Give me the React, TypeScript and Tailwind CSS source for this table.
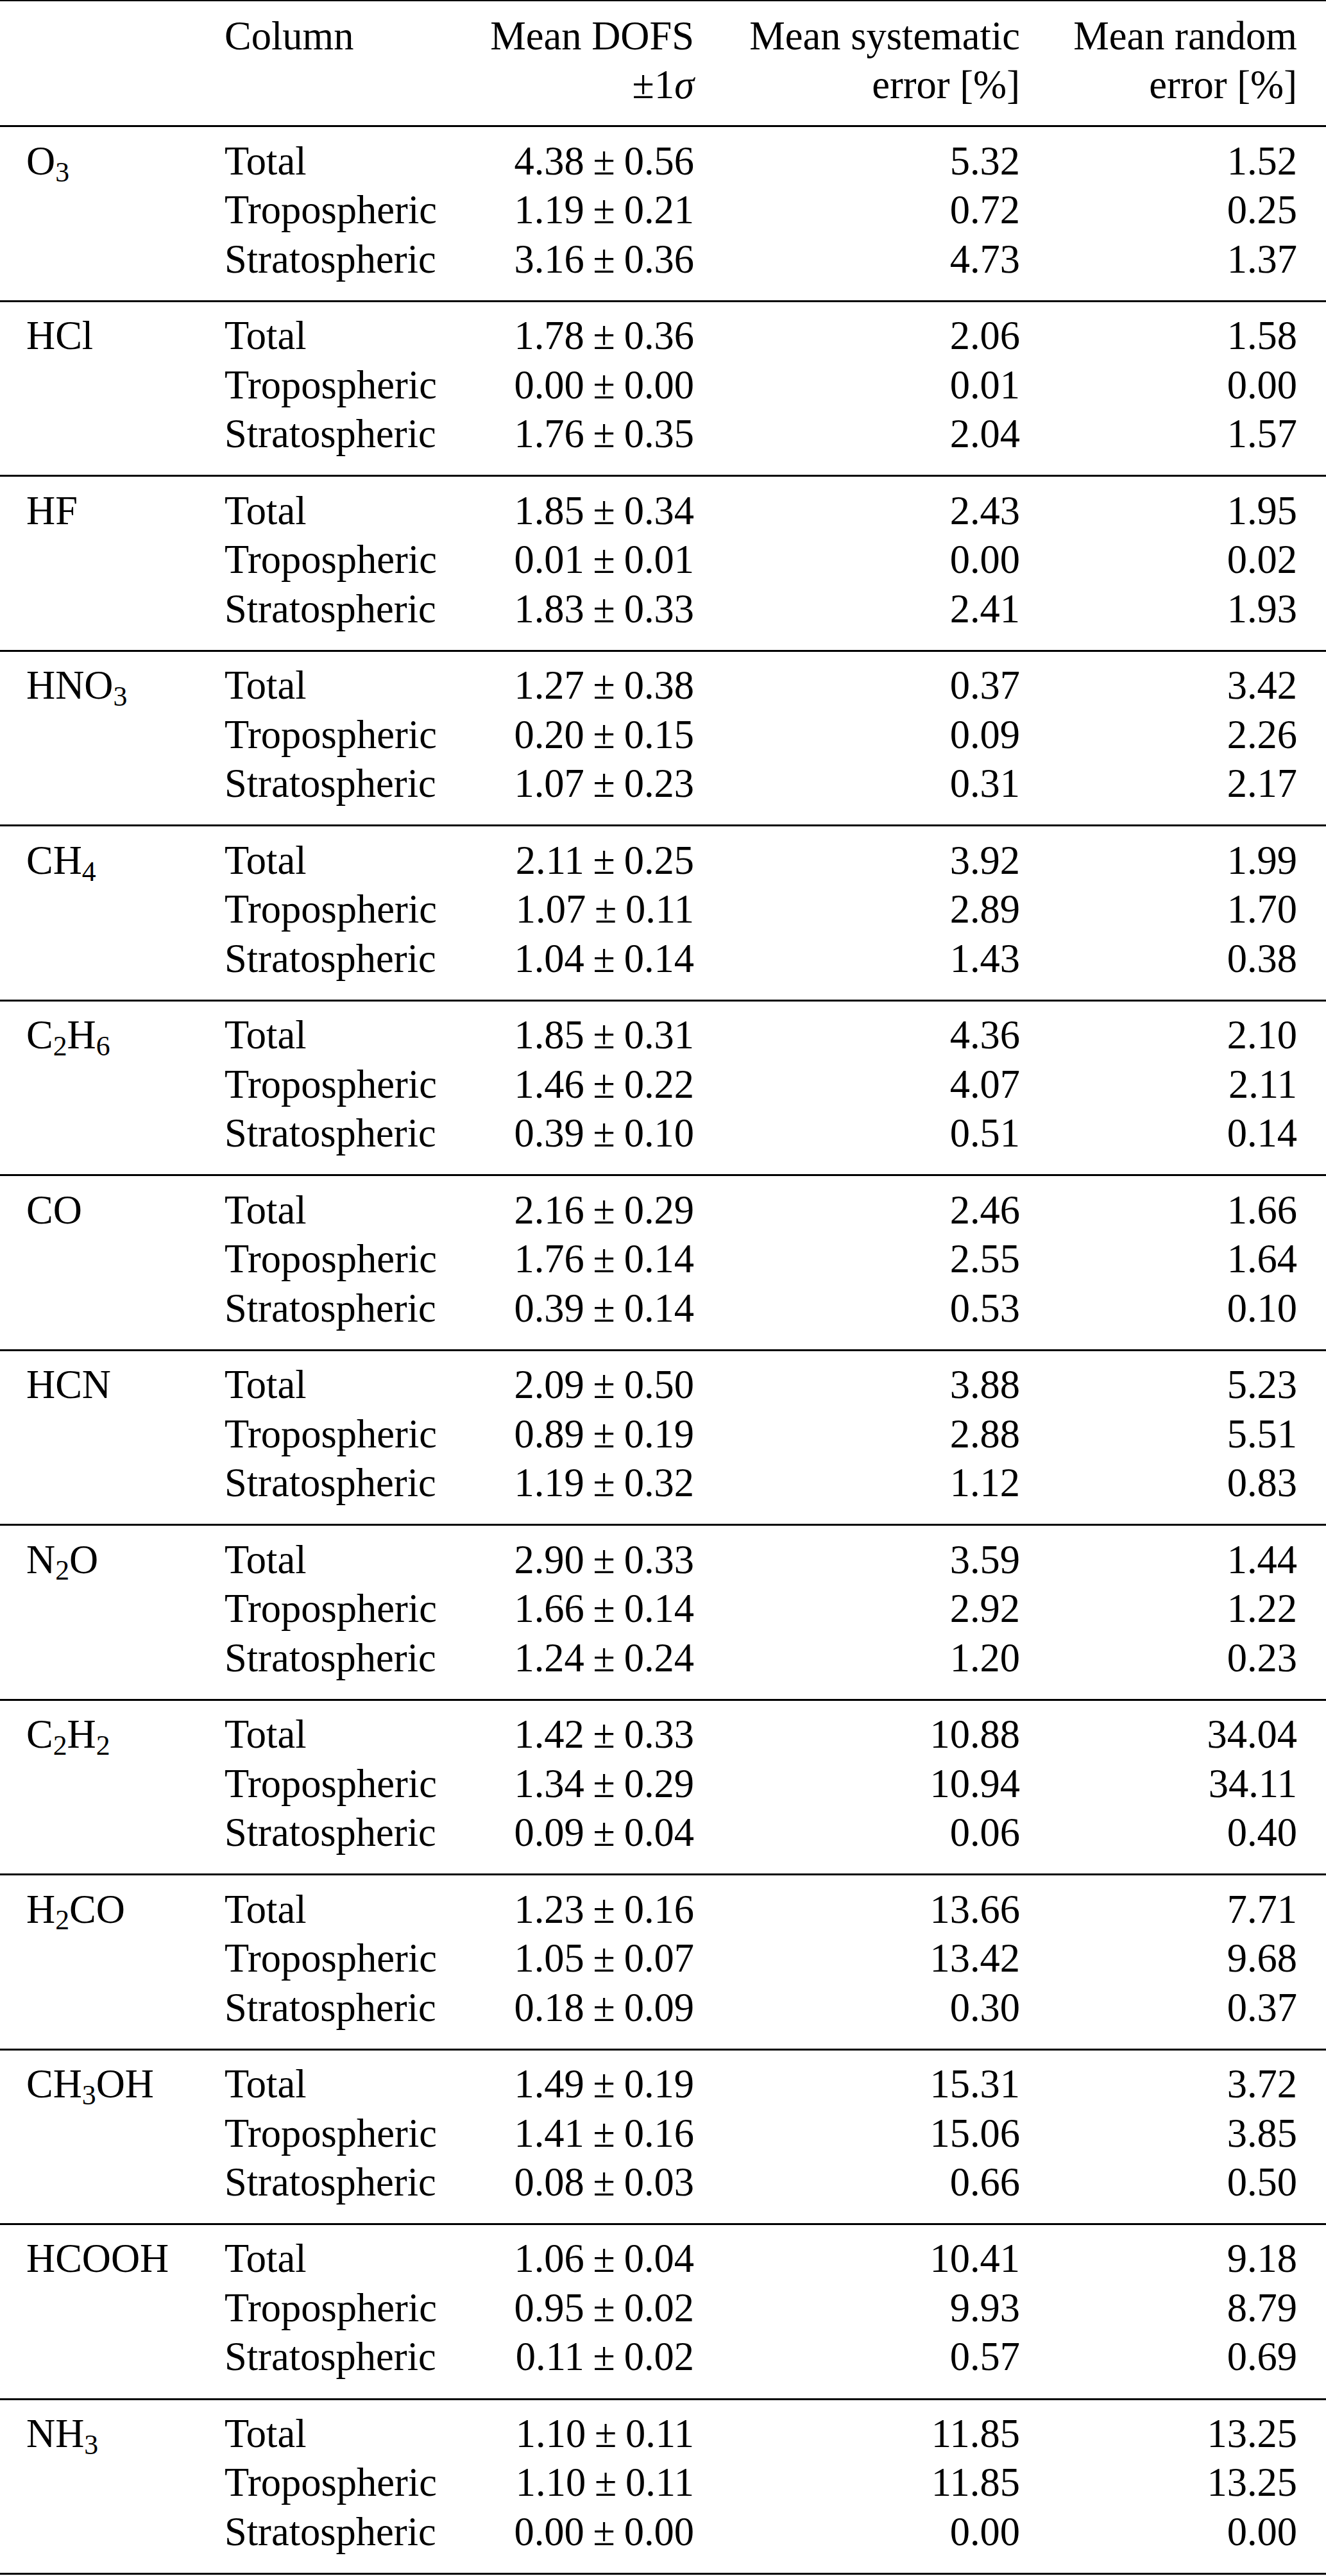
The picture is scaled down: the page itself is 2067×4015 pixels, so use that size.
import React from 'react';

type Row = [string, string, string, string, string];
type Group = { species: string; rows: Row[] };

const groups: Group[] = [
  { species: 'O3', rows: [['Total', '4.38', '0.56', '5.32', '1.52'], ['Tropospheric', '1.19', '0.21', '0.72', '0.25'], ['Stratospheric', '3.16', '0.36', '4.73', '1.37']] },
  { species: 'HCl', rows: [['Total', '1.78', '0.36', '2.06', '1.58'], ['Tropospheric', '0.00', '0.00', '0.01', '0.00'], ['Stratospheric', '1.76', '0.35', '2.04', '1.57']] },
  { species: 'HF', rows: [['Total', '1.85', '0.34', '2.43', '1.95'], ['Tropospheric', '0.01', '0.01', '0.00', '0.02'], ['Stratospheric', '1.83', '0.33', '2.41', '1.93']] },
  { species: 'HNO3', rows: [['Total', '1.27', '0.38', '0.37', '3.42'], ['Tropospheric', '0.20', '0.15', '0.09', '2.26'], ['Stratospheric', '1.07', '0.23', '0.31', '2.17']] },
  { species: 'CH4', rows: [['Total', '2.11', '0.25', '3.92', '1.99'], ['Tropospheric', '1.07', '0.11', '2.89', '1.70'], ['Stratospheric', '1.04', '0.14', '1.43', '0.38']] },
  { species: 'C2H6', rows: [['Total', '1.85', '0.31', '4.36', '2.10'], ['Tropospheric', '1.46', '0.22', '4.07', '2.11'], ['Stratospheric', '0.39', '0.10', '0.51', '0.14']] },
  { species: 'CO', rows: [['Total', '2.16', '0.29', '2.46', '1.66'], ['Tropospheric', '1.76', '0.14', '2.55', '1.64'], ['Stratospheric', '0.39', '0.14', '0.53', '0.10']] },
  { species: 'HCN', rows: [['Total', '2.09', '0.50', '3.88', '5.23'], ['Tropospheric', '0.89', '0.19', '2.88', '5.51'], ['Stratospheric', '1.19', '0.32', '1.12', '0.83']] },
  { species: 'N2O', rows: [['Total', '2.90', '0.33', '3.59', '1.44'], ['Tropospheric', '1.66', '0.14', '2.92', '1.22'], ['Stratospheric', '1.24', '0.24', '1.20', '0.23']] },
  { species: 'C2H2', rows: [['Total', '1.42', '0.33', '10.88', '34.04'], ['Tropospheric', '1.34', '0.29', '10.94', '34.11'], ['Stratospheric', '0.09', '0.04', '0.06', '0.40']] },
  { species: 'H2CO', rows: [['Total', '1.23', '0.16', '13.66', '7.71'], ['Tropospheric', '1.05', '0.07', '13.42', '9.68'], ['Stratospheric', '0.18', '0.09', '0.30', '0.37']] },
  { species: 'CH3OH', rows: [['Total', '1.49', '0.19', '15.31', '3.72'], ['Tropospheric', '1.41', '0.16', '15.06', '3.85'], ['Stratospheric', '0.08', '0.03', '0.66', '0.50']] },
  { species: 'HCOOH', rows: [['Total', '1.06', '0.04', '10.41', '9.18'], ['Tropospheric', '0.95', '0.02', '9.93', '8.79'], ['Stratospheric', '0.11', '0.02', '0.57', '0.69']] },
  { species: 'NH3', rows: [['Total', '1.10', '0.11', '11.85', '13.25'], ['Tropospheric', '1.10', '0.11', '11.85', '13.25'], ['Stratospheric', '0.00', '0.00', '0.00', '0.00']] },
];

const cols = 'grid grid-cols-[348px_400px_334px_508px_432px] pr-[45px]';

function Formula({ text }: { text: string }) {
  return (
    <>
      {text.split(/(\d+)/).map((part, i) =>
        /^\d+$/.test(part) ? (
          <sub key={i} className="text-[0.7em]">
            {part}
          </sub>
        ) : (
          <span key={i}>{part}</span>
        ),
      )}
    </>
  );
}

function Rule() {
  return <div className="h-[3px] bg-black" />;
}

export default function App() {
  return (
    <div
      className="w-[2067px] bg-white text-black text-[62.5px] leading-[76.5px]"
      style={{ fontFamily: '"Liberation Serif", "Times New Roman", serif' }}
    >
      <div className="h-[2px] bg-black" />
      <div className={`${cols} pt-[15.7px] pb-[24.8px]`}>
        <div />
        <div className="pl-[2px]">Column</div>
        <div className="text-right">
          <div>Mean DOFS</div>
          <div>
            ±1<span className="italic">σ</span>
          </div>
        </div>
        <div className="text-right">
          <div>Mean systematic</div>
          <div>error [%]</div>
        </div>
        <div className="text-right">
          <div>Mean random</div>
          <div>error [%]</div>
        </div>
      </div>
      {groups.map((g) => (
        <div key={g.species}>
          <Rule />
          <div className={`${cols} pt-[14.2px] pb-[25.8px]`}>
            {g.rows.map((r, i) => (
              <React.Fragment key={r[0]}>
                <div className="pl-[41px]">{i === 0 ? <Formula text={g.species} /> : null}</div>
                <div className="pl-[2px]">{r[0]}</div>
                <div className="text-right whitespace-nowrap">
                  {r[1]}
                  <span className="mx-[0.22em]">±</span>
                  {r[2]}
                </div>
                <div className="text-right">{r[3]}</div>
                <div className="text-right">{r[4]}</div>
              </React.Fragment>
            ))}
          </div>
        </div>
      ))}
      <Rule />
    </div>
  );
}
